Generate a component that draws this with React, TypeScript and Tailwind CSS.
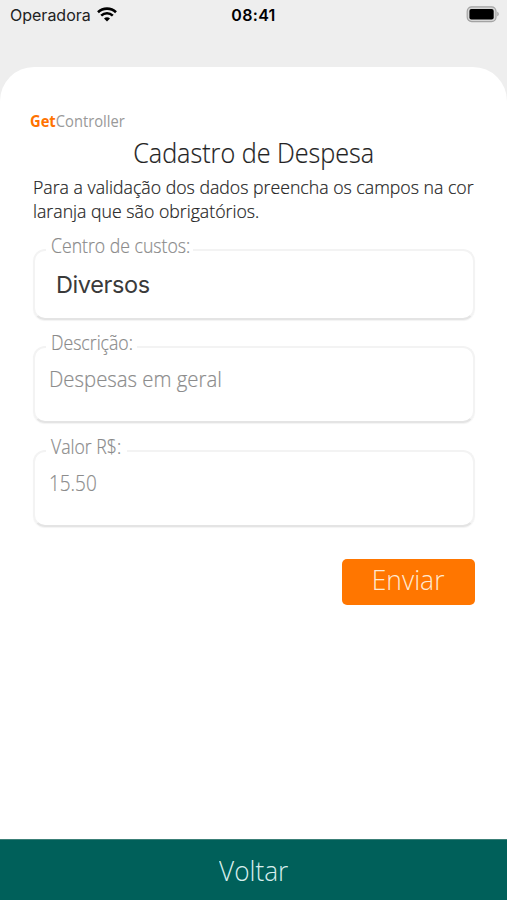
import React, { useState } from 'react';

type FieldProps = {
    label: string;
    className: string;
    legendClass: string;
    children: React.ReactNode;
};

const Field = ({ label, className, legendClass, children }: FieldProps) => (
    <fieldset
        className={`w-[442px] min-w-0 rounded-xl border-2 border-[#f3f3f3] border-b-[#e4e4e4] pl-[11px] shadow-[0_1px_1px_rgba(0,0,0,0.05)] ${className}`}
    >
        <legend className={`h-[31px] pl-[5px] ${legendClass}`}>
            <span className="block w-max origin-left scale-x-[0.905] whitespace-nowrap text-[19.5px] leading-6 font-light text-[#8a8a8a] [-webkit-text-stroke:0.2px]">
                {label}
            </span>
        </legend>
        {children}
    </fieldset>
);

const StatusBar = () => (
    <div className="grid h-[30px] grid-cols-3 items-center pr-2 pl-2.5 font-['Inter','Liberation_Sans',sans-serif] text-black">
        <div className="flex items-center gap-1.5">
            <span className="text-base text-[#222]">Operadora</span>
            <svg className="-mt-0.5" width="20" height="15" viewBox="0 0 20 15" fill="none" stroke="#000" strokeWidth="2.6">
                <path d="M1 5.2C6 .4 14 .4 19 5.2" />
                <path d="M4.2 8.6c3.3-3.1 8.3-3.1 11.6 0" />
                <path d="M10 14.6l-3-3.1c1.7-1.6 4.3-1.6 6 0z" fill="#000" stroke="none" />
            </svg>
        </div>
        <span className="-ml-0.5 text-center text-base font-semibold tracking-[0.3px]">08:41</span>
        <svg className="-mt-0.5 justify-self-end" width="33" height="17" viewBox="0 0 33 17">
            <rect x="1.2" y="0.8" width="28.8" height="14.8" rx="4.5" fill="#d6d6d6" stroke="#a3a3a3" strokeWidth="1.2" />
            <rect x="3.4" y="3" width="24.3" height="10.4" rx="2" fill="#000" />
            <path d="M31.3 5.8v4.5c1.9-.7 1.9-3.8 0-4.5z" fill="#a3a3a3" />
        </svg>
    </div>
);

const App = () => {
    const [description, setDescription] = useState('');
    const [amount, setAmount] = useState('');

    return (
        <div className="flex h-[900px] w-[507px] flex-col overflow-hidden bg-[#eeeeee] font-['Open_Sans','Noto_Sans',sans-serif]">
            <StatusBar />
            <main className="mt-[37px] flex-1 rounded-t-[34px] bg-white pl-[33px]">
                <div className="-ml-[3px] pt-[43px] text-[15.5px] leading-[22px] text-[#999]">
                    <span className="block w-max origin-left scale-x-[0.95]">
                        <b className="font-bold text-[#ff7200]">Get</b>Controller
                    </span>
                </div>
                <h1 className="flex w-[441px] justify-center pt-0.5 text-[27.5px] leading-[38px] font-light text-[#222] [-webkit-text-stroke:0.2px]">
                    <span className="scale-x-[0.915] whitespace-nowrap">Cadastro de Despesa</span>
                </h1>
                <p className="w-max origin-left scale-x-[0.931] pt-[3px] text-[19px] leading-6 font-light whitespace-nowrap text-[#222] [-webkit-text-stroke:0.2px]">
                    Para a validação dos dados preencha os campos na cor
                    <br />
                    laranja que são obrigatórios.
                </p>
                <form onSubmit={(e) => e.preventDefault()}>
                    <Field label="Centro de custos:" className="mt-[11px] h-[86px]" legendClass="w-[147px]">
                        <div className="pt-0.5 pl-2.5 font-['Inter','Liberation_Sans',sans-serif] text-[23.5px] leading-9 tracking-[-0.4px] text-[#3a3a3a]">
                            Diversos
                        </div>
                    </Field>
                    <Field label="Descrição:" className="mt-[11px] h-[92px]" legendClass="w-[91px]">
                        <input
                            value={description}
                            onChange={(e) => setDescription(e.target.value)}
                            placeholder="Despesas em geral"
                            className="-mt-1 ml-[3px] h-10 w-[400px] origin-left scale-x-[0.925] text-[22px] font-light outline-none [-webkit-text-stroke:0.2px] placeholder:text-[#8c8c8c]"
                        />
                    </Field>
                    <Field label="Valor R$:" className="mt-3 h-[92px]" legendClass="w-[81px]">
                        <input
                            value={amount}
                            onChange={(e) => setAmount(e.target.value)}
                            placeholder="15.50"
                            className="-mt-1 ml-[3px] h-10 w-[400px] origin-left scale-x-[0.86] text-[22px] font-light outline-none [-webkit-text-stroke:0.2px] placeholder:text-[#8c8c8c]"
                        />
                    </Field>
                    <button
                        type="submit"
                        className="mt-8 ml-[309px] flex h-[46px] w-[133px] justify-center rounded-[5px] bg-[#ff7600] text-[27px] leading-[42px] font-light text-[#ffe9d2]"
                    >
                        <span className="-ml-px scale-x-[0.98]">Enviar</span>
                    </button>
                </form>
            </main>
            <button className="flex h-[61px] w-full justify-center border-t border-[#3c8078] bg-[#00605a] text-[27px] leading-[62px] font-light text-[#d8eeee]">
                <span className="scale-x-[0.97]">Voltar</span>
            </button>
        </div>
    );
};

export default App;
